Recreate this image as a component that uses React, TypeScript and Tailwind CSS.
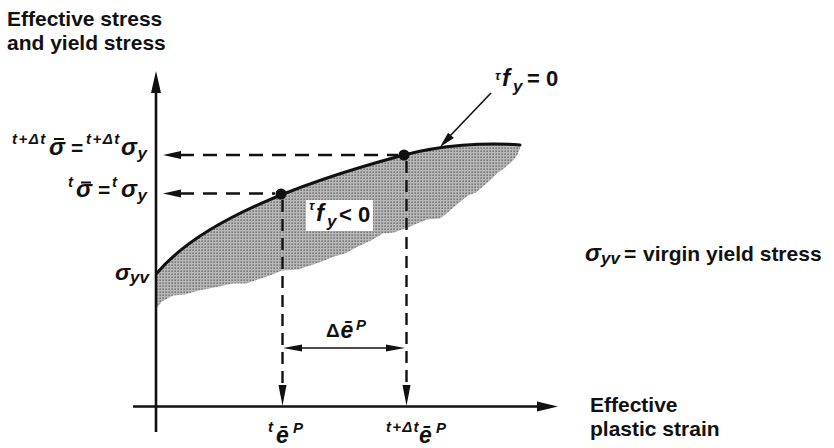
import React from "react";

// lower edge of the hatched region, right to left
const edge: [number, number][] = [
  [521, 150], [517, 156], [511, 161], [505, 167], [498, 174], [491, 179], [484, 186],
  [476, 191], [467, 197], [459, 204], [449, 211], [439, 217], [428, 221], [417, 224],
  [407, 227], [395, 231], [383, 235], [370, 241], [357, 247], [345, 252], [333, 258],
  [323, 262], [310, 265], [297, 268], [283, 272], [270, 276], [260, 278], [247, 282],
  [233, 285], [218, 287], [200, 290], [185, 293], [172, 297], [163, 302], [157, 307],
];

const jag = edge
  .map(([x, y], i) => `L${x + ((i * 7) % 3) - 1},${y + ((i * 5) % 4) - 1.5}`)
  .join(" ");

const curve = "M157,273 C195,228 280,188 404,155 C440,145.4 485,142 520,145";
const region = `${curve} ${jag} Z`;

const ink = "#111";

export default function App() {
  return (
    <div className="w-[834px] h-[448px] bg-white overflow-hidden">
      <svg
        width={834}
        height={448}
        viewBox="0 0 834 448"
        className="block font-['Liberation_Sans',Arial,sans-serif]"
        fill={ink}
      >
        <defs>
          <pattern id="dots" width="3" height="3" patternUnits="userSpaceOnUse">
            <rect width="3" height="3" fill="#b8b8b8" />
            <rect x="0.5" y="0.5" width="1.3" height="1.3" fill="#555" />
          </pattern>
        </defs>

        {/* shaded region + white label box */}
        <path d={region} fill="url(#dots)" />
        <rect x={306} y={200} width={67} height={31} fill="#fff" />

        {/* axes */}
        <line x1={156} y1={90} x2={156} y2={432} stroke={ink} strokeWidth={2.6} />
        <polygon points="156,71 151,93 161,93" />
        <line x1={133} y1={406.5} x2={540} y2={406.5} stroke={ink} strokeWidth={2.6} />
        <polygon points="558,406.5 537,401.5 537,411.5" />

        {/* yield curve */}
        <path d={curve} fill="none" stroke={ink} strokeWidth={3} strokeLinecap="round" />

        {/* dashed projections */}
        <line x1={180} y1={155} x2={398} y2={155} stroke={ink} strokeWidth={2.4} strokeDasharray="14 9" />
        <polygon points="163,155 181,151 181,159" />
        <line x1={180} y1={193.5} x2={275} y2={193.5} stroke={ink} strokeWidth={2.4} strokeDasharray="14 9" />
        <polygon points="163,193.5 181,189.5 181,197.5" />
        <line x1={282.5} y1={200} x2={282.5} y2={386} stroke={ink} strokeWidth={2.4} strokeDasharray="12 7" />
        <polygon points="282.5,406 278.5,385 286.5,385" />
        <line x1={406.5} y1={161} x2={406.5} y2={386} stroke={ink} strokeWidth={2.4} strokeDasharray="12 7" />
        <polygon points="406.5,406 402.5,385 410.5,385" />

        {/* increment arrow */}
        <line x1={290} y1={348} x2={400} y2={348} stroke={ink} strokeWidth={1.5} />
        <polygon points="283,348 302,344.5 302,351.5" />
        <polygon points="405,348 386,344.5 386,351.5" />

        {/* pointer to yield surface */}
        <line x1={491} y1={93} x2={449} y2={137} stroke={ink} strokeWidth={1.6} />
        <polygon points="440,147 453.9,138.1 448.1,132.7" />

        <circle cx={281} cy={194} r={5.5} />
        <circle cx={404} cy={155} r={5.5} />

        {/* overbars on effective stress */}
        <line x1={54} y1={139} x2={64} y2={139} stroke={ink} strokeWidth={2} />
        <line x1={81} y1={182.5} x2={91} y2={182.5} stroke={ink} strokeWidth={2} />

        {/* plain labels */}
        <g fontWeight="bold" fontSize={21}>
          <text x={7} y={26}>Effective stress</text>
          <text x={7} y={50}>and yield stress</text>
          <text x={590} y={412}>Effective</text>
          <text x={590} y={436}>plastic strain</text>
        </g>

        {/* math labels */}
        <g fontWeight="bold" fontStyle="italic">
          <text y={261}>
            <tspan x={585} fontSize={24}>σ</tspan>
            <tspan x={601} y={264} fontSize={17}>yv</tspan>
            <tspan x={624} y={261} fontSize={21} fontStyle="normal">=</tspan>
            <tspan x={643} fontSize={21} fontStyle="normal">virgin yield stress</tspan>
          </text>

          <text>
            <tspan x={12} y={144} fontSize={15} letterSpacing={1.5}>t+Δt</tspan>
            <tspan x={49} y={155} fontSize={24}>σ</tspan>
            <tspan x={71} y={155} fontSize={21} fontStyle="normal">=</tspan>
            <tspan x={86} y={144} fontSize={15} letterSpacing={1.5}>t+Δt</tspan>
            <tspan x={121} y={155} fontSize={24}>σ</tspan>
            <tspan x={137.5} y={159} fontSize={17}>y</tspan>
          </text>

          <text>
            <tspan x={68} y={187} fontSize={15}>t</tspan>
            <tspan x={76} y={197} fontSize={24}>σ</tspan>
            <tspan x={98} y={197} fontSize={21} fontStyle="normal">=</tspan>
            <tspan x={112} y={187} fontSize={15}>t</tspan>
            <tspan x={121} y={197} fontSize={24}>σ</tspan>
            <tspan x={137.5} y={201} fontSize={17}>y</tspan>
          </text>

          <text>
            <tspan x={115} y={280} fontSize={23}>σ</tspan>
            <tspan x={130} y={283} fontSize={17}>yv</tspan>
          </text>

          <text>
            <tspan x={495} y={80} fontSize={13}>τ</tspan>
            <tspan x={502} y={86} fontSize={24}>f</tspan>
            <tspan x={513} y={92} fontSize={17}>y</tspan>
            <tspan x={527} y={86} fontSize={22} fontStyle="normal">= 0</tspan>
          </text>

          <text>
            <tspan x={309} y={210} fontSize={13}>τ</tspan>
            <tspan x={316} y={221} fontSize={24}>f</tspan>
            <tspan x={327} y={227} fontSize={17}>y</tspan>
            <tspan x={339} y={222} fontSize={22} fontStyle="normal">{"< 0"}</tspan>
          </text>

          <text>
            <tspan x={326} y={337} fontSize={19} fontStyle="normal">Δ</tspan>
            <tspan x={340.5} y={338} fontSize={23}>ē</tspan>
            <tspan x={356} y={330} fontSize={15}>P</tspan>
          </text>

          <text>
            <tspan x={268} y={432} fontSize={15}>t</tspan>
            <tspan x={276} y={443} fontSize={23}>ē</tspan>
            <tspan x={293} y={433} fontSize={15}>P</tspan>
          </text>

          <text>
            <tspan x={386} y={432} fontSize={15} letterSpacing={1.2}>t+Δt</tspan>
            <tspan x={419} y={443} fontSize={23}>ē</tspan>
            <tspan x={436} y={433} fontSize={15}>P</tspan>
          </text>
        </g>
      </svg>
    </div>
  );
}
